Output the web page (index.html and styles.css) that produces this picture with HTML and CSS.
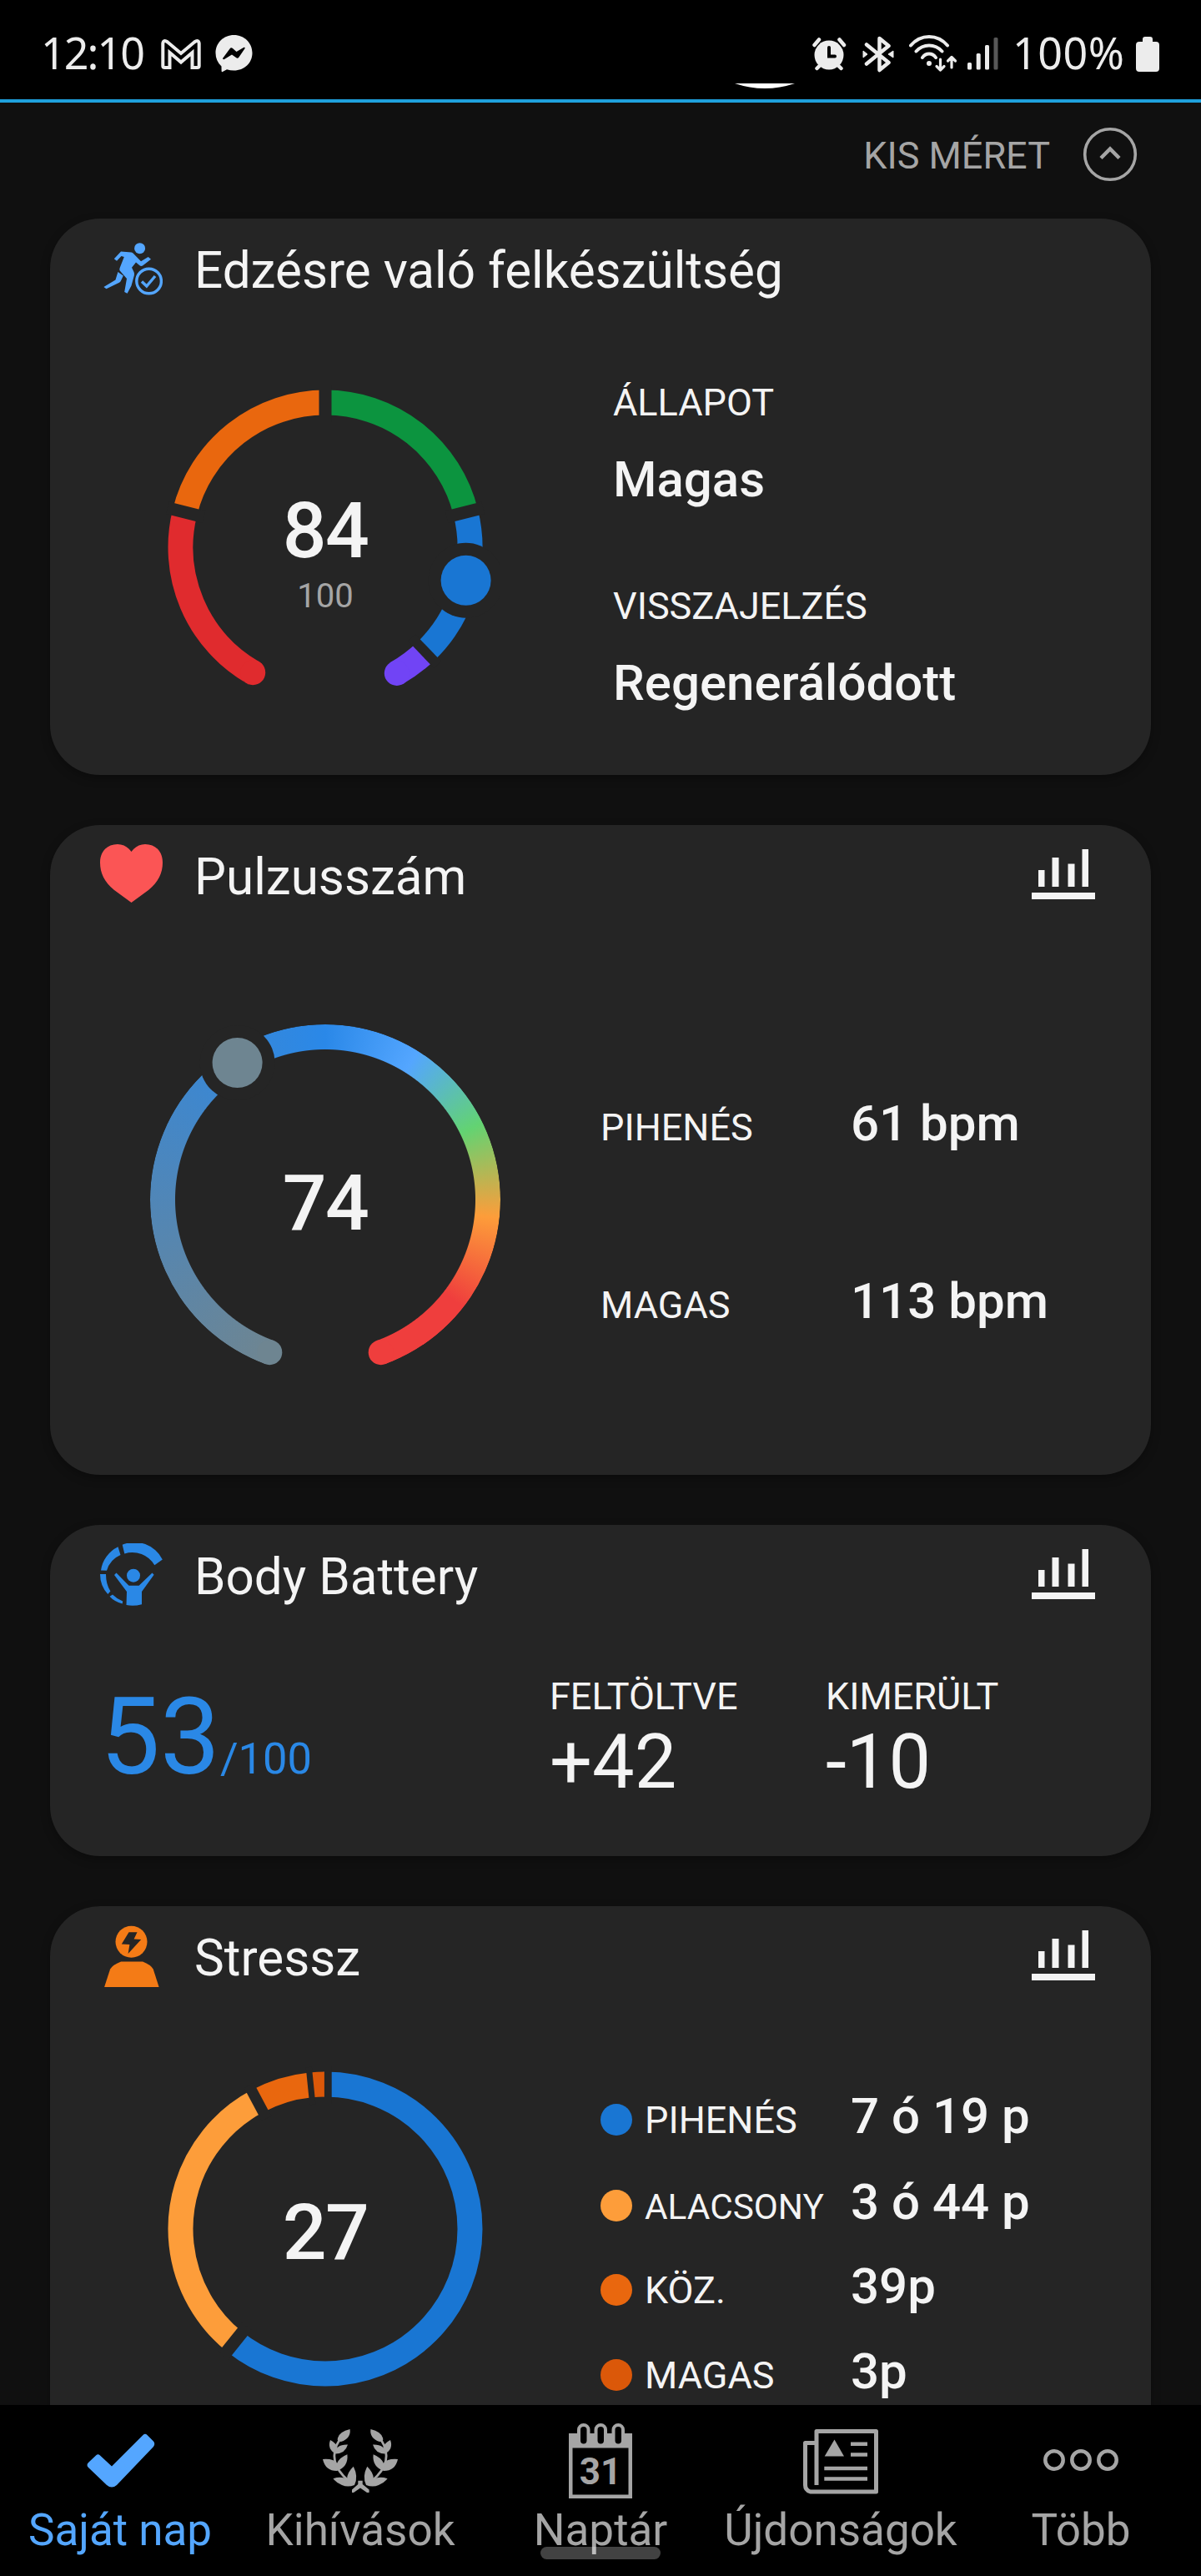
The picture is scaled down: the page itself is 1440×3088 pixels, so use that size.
FILE: index.html
```html
<!DOCTYPE html>
<html lang="hu">
<head>
    <meta charset="utf-8" />
    <title>Saját nap</title>
    <link rel="stylesheet" href="styles.css">
</head>
<body>
    <!-- Shared chart icon -->
    <svg width="0" height="0" class="defs">
        <symbol id="chart" viewBox="0 0 76 75">
            <path d="M8 32h7.5v20H8zM24.5 17h8v35h-8zM43.5 24.500h8V52h-8zM60.500 7H68v45h-7.500zM0 59h76v8H0z" fill="#f4f4f4" />
        </symbol>
    </svg>

    <header class="status-bar">
        <div class="status-left">
            <span class="clock">12:10</span>
            <svg class="icon-mail" width="48" height="38" viewBox="0 0 48 38">
                <path d="M2.300 33V6Q3 1 8 4.500L24 18 40 4.500Q45 1 45.700 6V33Q45.700 35 43.500 35H37.500V17L24 28.500 10.500 17V35H4.500Q2.300 35 2.300 33Z" fill="none" stroke="#ececec" stroke-width="4" />
            </svg>
            <svg width="45" height="45" viewBox="0 0 45 45">
                <path d="M22.500 0C35 0 44.500 9.500 44.500 21.500S35 42.500 22.500 42.500Q18 42.500 14 41.200L8.500 44.300Q7.600 44.300 7.600 43L7.500 37.500Q.5 31 .5 21.500C.5 9.500 10 0 22.500 0Z" fill="#ececec" />
                <path d="M9 28l8.500-11.500q1.500-2 3.500-.5l4.500 4 9-5.200q2-.3 1 1.500L28.500 26.500q-1.500 2-3.500.6l-5-3.700-9 5.600q-2 .6-2-1Z" fill="#000" />
            </svg>
        </div>
        <div class="status-right">
            <svg class="camera" width="72" height="6" viewBox="0 0 72 6">
                <path d="M0 0H72Q36 12 0 0Z" fill="#fff" />
            </svg>
            <svg width="41" height="40" viewBox="0 0 41 40">
                <circle cx="20" cy="21" r="17.500" fill="#ececec" />
                <path d="M2.500 9 8 2.500M38 9 32.500 2.500M5.500 37l4-4M34.500 37l-4-4" stroke="#ececec" stroke-width="4.500" stroke-linecap="round" />
                <path d="M20 12V22.500H27" fill="none" stroke="#000" stroke-width="4" stroke-linecap="round" />
            </svg>
            <svg class="icon-bt" width="38" height="44" viewBox="0 0 38 44">
                <path d="M5 10.500 31.500 32 20.500 41V3L31.500 12 5 33.500" fill="none" stroke="#ececec" stroke-width="4.500" stroke-linejoin="round" stroke-linecap="round" />
                <path d="M1 18l5 4-5 4zM37 18l-6 4 6 4z" fill="#ececec" stroke="#ececec" stroke-linejoin="round" />
            </svg>
            <svg class="icon-wifi" width="59" height="45" viewBox="0 0 59 45">
                <g fill="none" stroke="#ececec" stroke-width="4" stroke-linecap="round" stroke-linejoin="round">
                    <path d="M2 12.500Q11 2 24 2T46 12.500M8.500 19.500Q15 12.500 24 12.500T39.500 19.500M16 27Q19 22.500 24 22.500T32 27" />
                    <path d="M37.500 29V42M33 37.500l4.500 4.500 4.500-4.500M51 39V27M46.500 31l4.500-4.500 4.500 4.500" stroke-width="3.200" />
                </g>
                <circle cx="24" cy="34" r="3" fill="#ececec" />
            </svg>
            <svg class="icon-signal" width="37" height="39" viewBox="0 0 37 39">
                <g fill="#ececec">
                    <rect x="0" y="30" width="5" height="8.500" rx="1.500" />
                    <rect x="10.700" y="19" width="5" height="19.500" rx="1.500" />
                    <rect x="21" y="9" width="5" height="29.500" rx="1.500" />
                    <rect x="31.500" y="0" width="5" height="38.500" rx="1.500" fill="#575757" />
                </g>
            </svg>
            <span class="percent">100%</span>
            <svg width="28" height="42" viewBox="0 0 28 42">
                <path d="M8 6V3Q8 0 11 0H17Q20 0 20 3V6H24Q28 6 28 10V38Q28 42 24 42H4Q0 42 0 38V10Q0 6 4 6Z" fill="#ececec" />
            </svg>
        </div>
    </header>

    <main class="content">
        <div class="resize">
            <span>KIS MÉRET</span>
            <svg width="66" height="66" viewBox="0 0 66 66" fill="none" stroke="#a5a5a5">
                <circle cx="33" cy="33" r="30.300" stroke-width="3.600" />
                <path d="M22 37.500 33 26.500 44 37.500" stroke-width="4.500" />
            </svg>
        </div>

        <section class="card readiness">
            <div class="card-head">
                <svg class="card-icon" viewBox="0 0 75 75" fill="#54a6ff">
                    <circle cx="47.600" cy="13.700" r="6.500" />
                    <path d="M25 17.500 37.500 18.500Q39 18.800 40 20L49 29.300 57.700 24 61 26.700 51 34.500Q49 35.500 47.500 34.300L43 30.500 38 36.700 40.500 42Q41.300 43.500 40.900 46L37.500 58.500 32.600 67.700 29.200 66 32 50 23.700 40.500Q22.800 39 23.700 37L28.800 24 25.500 23 20 28.800 16.800 26.200Z" />
                    <path d="M21.400 42 27.800 46.500 25 52.500Q24.500 54 23 54.800L7.500 62.200 4.400 60 18.500 51.500Z" />
                    <circle cx="58.600" cy="53" r="14.800" fill="none" stroke="#54a6ff" stroke-width="3.400" />
                    <path d="M50 53.500 55.800 59 66 47" fill="none" stroke="#54a6ff" stroke-width="3.400" />
                </svg>
                <h2>Edzésre való felkészültség</h2>
            </div>
            <div class="card-body">
                <svg class="gauge" viewBox="-210 -210 420 420">
                    <g fill="none" stroke-width="30">
                        <circle r="173.500" pathLength="360" stroke="#e02b2e" stroke-dasharray="74 286" transform="rotate(120)" />
                        <circle r="173.500" pathLength="360" stroke="#e9670e" stroke-dasharray="76 284" transform="rotate(194)" />
                        <circle r="173.500" pathLength="360" stroke="#0c943f" stroke-dasharray="76 284" transform="rotate(270)" />
                        <circle r="173.500" pathLength="360" stroke="#1976d3" stroke-dasharray="60.500 299.500" transform="rotate(-14)" />
                        <circle r="173.500" pathLength="360" stroke="#7144f5" stroke-dasharray="14 346" transform="rotate(46.500)" />
                    </g>
                    <circle cx="-86.800" cy="150.200" r="15" fill="#e02b2e" />
                    <circle cx="85.800" cy="151" r="15" fill="#7144f5" />
                    <g stroke="#252525" stroke-width="15">
                        <path d="M0-150V-195" />
                        <path d="M0-150V-195" transform="rotate(-76)" />
                        <path d="M0-150V-195" transform="rotate(76)" />
                        <path d="M0-150V-195" transform="rotate(136.300)" stroke-width="12" />
                    </g>
                    <circle cx="168.600" cy="39.800" r="45" fill="#252525" />
                    <circle cx="168.600" cy="39.800" r="30" fill="#1976d3" />
                    <text class="gauge-value" y="12.400">84</text>
                    <text class="gauge-max" y="72">100</text>
                </svg>
                <div class="facts">
                    <p class="label">ÁLLAPOT</p>
                    <p class="value">Magas</p>
                    <p class="label">VISSZAJELZÉS</p>
                    <p class="value">Regenerálódott</p>
                </div>
            </div>
        </section>

        <section class="card pulse">
            <div class="card-head">
                <svg class="card-icon" viewBox="0 0 75 75" fill="#fb5555">
                    <path d="M37.500 71 17 56C5 46.500 0 35 0 23 0 9 9 1 21 1Q31 1 37.500 10 44 1 54 1C66 1 75 9 75 23 75 35 70 46.500 58 56Z" />
                </svg>
                <h2>Pulzusszám</h2>
                <svg class="chart-icon"><use href="#chart" /></svg>
            </div>
            <div class="card-body">
                <div class="gauge pulse-gauge">
                    <div class="pulse-ring"></div>
                    <svg class="pulse-marks" viewBox="-210 -210 420 420">
                        <circle cx="-66.700" cy="183.200" r="15" fill="#6e8591" />
                        <circle cx="66.700" cy="183.200" r="15" fill="#ef3e3d" />
                        <circle cx="-105.400" cy="-164" r="45" fill="#252525" />
                        <circle cx="-105.400" cy="-164" r="30" fill="#6e8591" />
                        <text class="gauge-value" y="35.800">74</text>
                    </svg>
                </div>
                <div class="rows">
                    <div class="row"><span class="label">PIHENÉS</span><span class="value">61 bpm</span></div>
                    <div class="row"><span class="label">MAGAS</span><span class="value">113 bpm</span></div>
                </div>
            </div>
        </section>

        <section class="card battery">
            <div class="card-head">
                <svg class="card-icon" viewBox="0 0 75 75" fill="#2a88e6">
                    <path d="M26.700 1.800A37.500 37.500 0 0 1 74.800 19.400L65.300 26.300A31 31 0 0 0 29.300 12.400Z" />
                    <path d="M21.500 4.300 24.500 14A29 29 0 0 0 8 32.800L1 32.400A37.500 37.500 0 0 1 21.500 4.300Z" />
                    <path d="M0 37H7Q7 49 12.400 57.600L9.300 61Q0 51 0 37Z" />
                    <path d="M11.500 63.800 15 61.400Q20 66.500 27.200 69.400L26.700 72.500Q17 70 11.500 63.800Z" />
                    <circle cx="40" cy="38.700" r="8" />
                    <path d="M19.500 35.500 34.500 50.800H46.600L62.500 35.500 64.600 37.800 50 58V73.200Q40 76 31.500 74L32 58 17 38Z" />
                </svg>
                <h2>Body Battery</h2>
                <svg class="chart-icon"><use href="#chart" /></svg>
            </div>
            <div class="card-body">
                <p class="score">53<small>/100</small></p>
                <div class="stat charged">
                    <p class="label">FELTÖLTVE</p>
                    <p class="number">+42</p>
                </div>
                <div class="stat">
                    <p class="label">KIMERÜLT</p>
                    <p class="number">-10</p>
                </div>
            </div>
        </section>

        <section class="card stress">
            <div class="card-head">
                <svg class="card-icon" viewBox="0 0 75 75">
                    <circle cx="37.500" cy="20.800" r="19" fill="#f47b16" />
                    <path d="M34.500 9.300H44.500L40.600 17.500 49.200 17.900 33.600 35 35.400 24 25.800 23.600Z" fill="#252525" />
                    <path d="M27.600 44.400H53.600Q63 48 66.200 53.400L73.100 75H7.600L14.600 53.400Q18 48 27.600 44.400Z" fill="#f47b16" transform="translate(-2.500)" />
                </svg>
                <h2>Stressz</h2>
                <svg class="chart-icon"><use href="#chart" /></svg>
            </div>
            <div class="card-body">
                <svg class="gauge" viewBox="-210 -210 420 420">
                    <g fill="none" stroke-width="30">
                        <circle r="173.500" pathLength="360" stroke="#1976d3" stroke-dasharray="218.800 141.200" transform="rotate(-90)" />
                        <circle r="173.500" pathLength="360" stroke="#fd9d3a" stroke-dasharray="113.200 246.800" transform="rotate(128.800)" />
                        <circle r="173.500" pathLength="360" stroke="#e9670e" stroke-dasharray="22.200 337.800" transform="rotate(242)" />
                        <circle r="173.500" pathLength="360" stroke="#db5809" stroke-dasharray="5.800 354.200" transform="rotate(264.200)" />
                    </g>
                    <g stroke="#252525" stroke-width="15">
                        <path d="M3.300-150V-195" stroke-width="8.800" />
                        <path d="M0-150V-195" transform="rotate(218.800)" />
                        <path d="M0-150V-195" transform="rotate(-28)" stroke-width="13" />
                        <path d="M0-150V-195" transform="rotate(-5.800)" stroke-width="7.200" />
                    </g>
                    <text class="gauge-value" y="35.500">27</text>
                </svg>
                <div class="rows">
                    <div class="row"><span class="dot rest"></span><span class="label">PIHENÉS</span><span class="value">7 ó 19 p</span></div>
                    <div class="row row-low"><span class="dot low"></span><span class="label small">ALACSONY</span><span class="value">3 ó 44 p</span></div>
                    <div class="row"><span class="dot medium"></span><span class="label">KÖZ.</span><span class="value">39p</span></div>
                    <div class="row"><span class="dot high"></span><span class="label">MAGAS</span><span class="value">3p</span></div>
                </div>
            </div>
        </section>
    </main>

    <nav class="tabs">
        <a class="tab active">
            <svg width="90" height="90" viewBox="0 0 90 90">
                <path d="M7 47 16 38.500Q18.500 36 21 38.500L35 51.500 72.500 14Q75 11.500 77.500 14L85 21.500Q87.500 24.500 85 28L41 74Q35 79 29 74L7 53Q4 50 7 47Z" fill="#54a6ff" />
            </svg>
            <span>Saját nap</span>
        </a>
        <a class="tab">
            <svg width="90" height="90" viewBox="0 -7 90 90" fill="#a5a5a5">
                <g id="branch">
                    <path d="M32.600 0Q20 3 18 10.500 16.500 15 22 15 34 11 32.600 0Z" />
                    <path d="M9 13Q5 24 15.500 29.500 22 20 9 13Z" />
                    <path d="M30 18.500Q15 18 15.500 29.500 27 29 30 18.500Z" />
                    <path d="M0 36Q13 35 17 41 20 34 29.400 30.300 31 45 17 50 3 50 0 36Z" />
                    <path d="M12.400 59.300Q22 56 29 60 29 52 36.800 44.700 43 57 38 67 30 70 23 67 16 64 12.400 59.300Z" />
                    <path d="M20 13Q12 25 14.500 38 17 50 31 62" fill="none" stroke="#a5a5a5" stroke-width="2.800" />
                </g>
                <use href="#branch" transform="matrix(-1 0 0 1 90 0)" />
                <path d="M42.300 61.700H47.700V66L55.600 72.500V76H53L45 70.500 37 76H35V72.500L42.300 66Z" />
            </svg>
            <span>Kihívások</span>
        </a>
        <a class="tab">
            <svg width="76" height="90" viewBox="0 0 76 90">
                <path d="M0 12H76V90H0Z" fill="#a5a5a5" />
                <path d="M4.500 29.500H71.500V85.500H4.500Z" fill="#000" />
                <g fill="#000" stroke="#a5a5a5" stroke-width="4">
                    <rect x="12" y="2" width="11.500" height="24.500" rx="5.700" />
                    <rect x="32.500" y="2" width="11.500" height="24.500" rx="5.700" />
                    <rect x="53.500" y="2" width="11.500" height="24.500" rx="5.700" />
                </g>
                <text class="day" x="38" y="72.500">31</text>
            </svg>
            <span>Naptár</span>
        </a>
        <a class="tab">
            <svg width="90" height="90" viewBox="0 -7 90 90">
                <path d="M16 67V2.500H87.500V75H8.500Q2.500 73 2.500 67V16.500H16" fill="none" stroke="#a5a5a5" stroke-width="5" stroke-linejoin="round" />
                <path d="M37.500 12.500 25.700 32.500H49ZM57 15.500H77V20H57ZM57 28.200H77V32.700H57ZM25.300 44.700H77V49.200H25.300ZM25.300 57.200H77V61.700H25.300Z" fill="#a5a5a5" />
            </svg>
            <span>Újdonságok</span>
        </a>
        <a class="tab">
            <svg width="90" height="90" viewBox="0 0 90 90" fill="none" stroke="#a5a5a5" stroke-width="4.500">
                <circle cx="13" cy="44" r="10.700" />
                <circle cx="45" cy="44" r="10.700" />
                <circle cx="77" cy="44" r="10.700" />
            </svg>
            <span>Több</span>
        </a>
        <div class="home-handle"></div>
    </nav>
</body>
</html>
```

FILE: styles.css
```css
* {
    box-sizing: border-box;
}

body {
    margin: 0;
    width: 1440px;
    height: 3088px;
    display: flex;
    flex-direction: column;
    overflow: hidden;
    background-color: #101010;
    color: #f4f4f4;
    font-family: Roboto, "Liberation Sans", sans-serif;
}

svg {
    display: block;
    flex-shrink: 0;
}

.defs {
    display: none;
}

h2, p {
    margin: 0;
    font-weight: 400;
}

/* Status bar */
.status-bar {
    flex: none;
    height: 123px;
    padding: 10px 50px 0 49px;
    display: flex;
    justify-content: space-between;
    background-color: #000;
    border-bottom: 4px solid #1fa1dd;
    color: #ececec;
    font-family: "Noto Sans", Roboto, sans-serif;
    font-size: 52px;
    line-height: 60px;
}

.status-left,
.status-right {
    display: flex;
    align-items: center;
}

.clock {
    width: 144px;
    padding-bottom: 4px;
    letter-spacing: -2px;
}

.icon-mail {
    margin-right: 17px;
}

.camera {
    align-self: flex-end;
    margin: 0 21px 13px 0;
}

.icon-bt {
    margin: 0 18px 0 19px;
}

.icon-signal {
    margin: 0 17px 0 11px;
}

.percent {
    width: 148px;
    padding-bottom: 4px;
    letter-spacing: 0.5px;
}

/* Content */
.content {
    flex: 1;
    min-height: 0;
    overflow: hidden;
    padding: 0 60px;
    display: flex;
    flex-direction: column;
    gap: 60px;
}

.resize {
    flex: none;
    height: 139px;
    margin-bottom: -60px;
    padding: 0 16px 15px 0;
    display: flex;
    align-items: center;
    justify-content: flex-end;
    gap: 39px;
    color: #a5a5a5;
    font-size: 45px;
}

.resize span {
    padding-top: 3px;
}

.card {
    flex: none;
    background-color: #252525;
    border-radius: 60px;
    box-shadow: 0 4px 12px rgba(0, 0, 0, 0.3);
}

.readiness {
    height: 667px;
}

.pulse {
    height: 779px;
}

.battery {
    height: 397px;
}

.stress {
    height: 760px;
}

.card-head {
    display: flex;
    align-items: flex-start;
    padding: 22px 67px 0 60px;
}

.card-head h2 {
    flex: 1;
    margin-left: 38px;
    font-size: 60.2px;
    line-height: 81px;
}

.card-icon {
    width: 75px;
    height: 75px;
}

.chart-icon {
    width: 76px;
    height: 75px;
}

.card-body {
    display: flex;
    align-items: flex-start;
}

.label {
    font-size: 45px;
    line-height: 54px;
}

.value {
    font-size: 60px;
    font-weight: 500;
    line-height: 72px;
}

/* Gauges */
.gauge {
    width: 420px;
    height: 420px;
    flex: none;
    margin-left: 120px;
}

.gauge-value {
    fill: #f4f4f4;
    font-size: 93px;
    font-weight: 500;
    letter-spacing: -1.5px;
    text-anchor: middle;
}

.gauge-max {
    fill: #a5a5a5;
    font-size: 40px;
    text-anchor: middle;
}

.readiness .gauge {
    margin-top: 80.6px;
}

.facts {
    padding: 91px 0 0 135px;
}

.facts .label {
    margin-bottom: 28.5px;
}

.facts .value {
    margin-bottom: 89.5px;
}

.pulse-gauge {
    position: relative;
    margin: 135.8px 0 0 120px;
}

.pulse-ring {
    height: 420px;
    background: conic-gradient(from 200deg, #6e8591 0deg, #2a88e8 160deg, #54a6ff 192deg, #63d372 224deg, #fd9d3a 256deg, #ef3e3d 288deg 320deg, transparent 320deg);
    border-radius: 50%;
    -webkit-mask: radial-gradient(circle, transparent 179.5px, #000 180.5px);
    mask: radial-gradient(circle, transparent 179.5px, #000 180.5px);
}

/* knob and end caps sit over the ring */
.pulse-marks {
    position: absolute;
    inset: 0;
}

/* Label / value rows */
.rows {
    display: flex;
    flex-direction: column;
    margin-left: 120px;
}

.row {
    display: flex;
    align-items: baseline;
}

.row .label {
    width: 300px;
}

.pulse .rows {
    gap: 141px;
    padding-top: 218.5px;
}

.stress .gauge {
    margin-top: 73.5px;
}

.stress .rows {
    gap: 29.8px;
    padding-top: 113.2px;
}

.stress .row .label {
    width: 247px;
}

.row .small {
    font-size: 42.3px;
}

.row-low {
    margin: 1px 0 -1px;
}

.dot {
    width: 38px;
    height: 38px;
    margin: 0 15px -3px 0;
    border-radius: 50%;
    transform: translateY(3px);
}

.rest {
    background-color: #1976d3;
}

.low {
    background-color: #fd9d3a;
}

.medium {
    background-color: #e9670e;
}

.high {
    background-color: #db5809;
}

/* Body Battery */
.score {
    width: 599px;
    padding: 87.3px 0 0 60px;
    color: #2a88e6;
    font-size: 128px;
    line-height: 128px;
}

.score small {
    font-size: 52.5px;
}

.stat {
    padding-top: 75.8px;
}

.charged {
    width: 331px;
}

.number {
    margin-top: 7px;
    font-size: 90px;
    line-height: 90px;
}

/* Bottom navigation */
.tabs {
    flex: none;
    position: relative;
    height: 205px;
    padding-top: 22px;
    display: flex;
    background-color: #000;
}

.tab {
    width: 20%;
    display: flex;
    flex-direction: column;
    align-items: center;
    color: #a5a5a5;
    font-size: 53px;
    line-height: 60px;
    white-space: nowrap;
}

.tab span {
    margin-top: 8px;
}

.tab.active {
    color: #54a6ff;
}

.day {
    fill: #a5a5a5;
    font-size: 44px;
    font-weight: 700;
    text-anchor: middle;
}

/* system gesture handle, drawn over the tab label */
.home-handle {
    position: absolute;
    left: 648px;
    top: 170px;
    width: 144px;
    height: 15px;
    border-radius: 8px;
    background-color: rgba(255, 255, 255, 0.26);
}
```
